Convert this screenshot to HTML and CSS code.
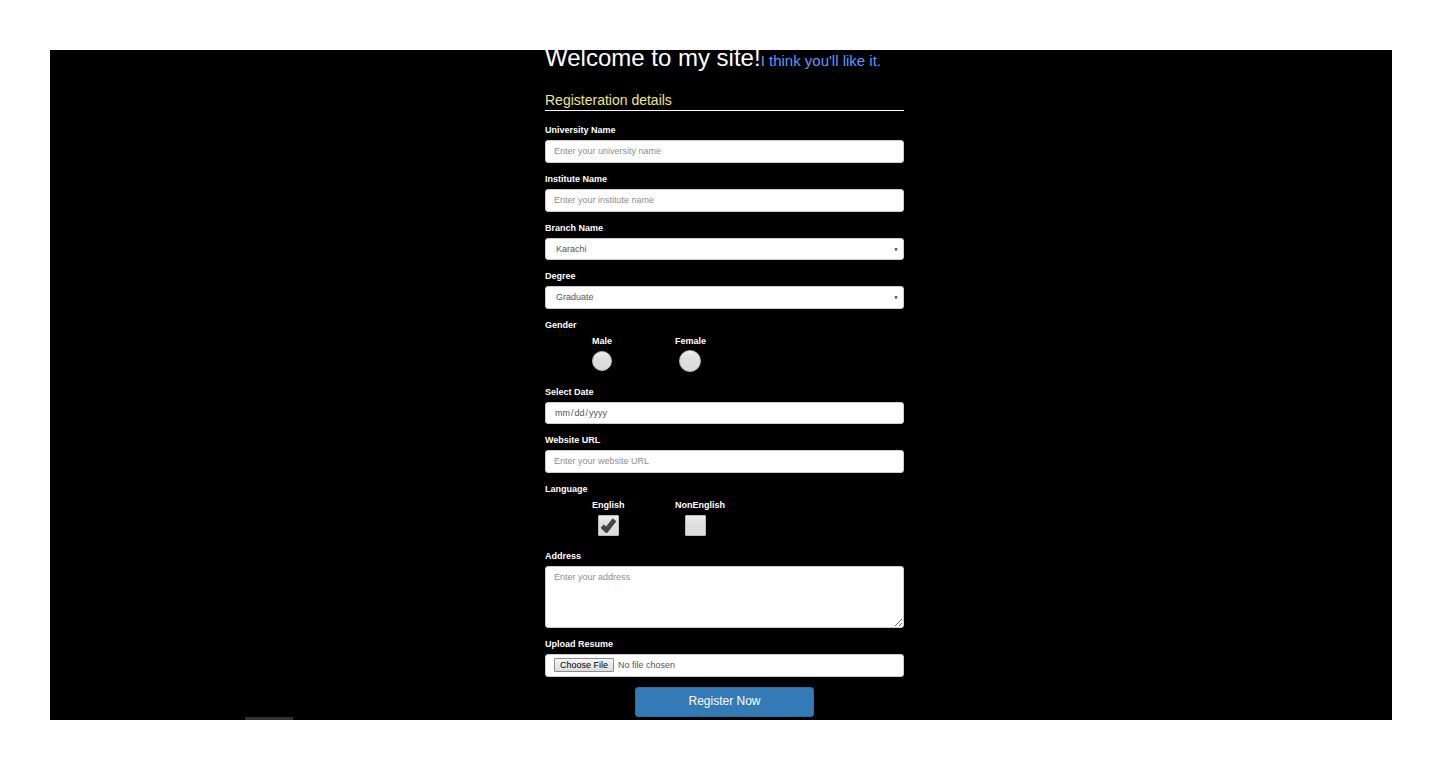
FILE: index.html
```html
<!DOCTYPE html>
<html lang="en-US">
<head>
<meta charset="utf-8">
<title>Registration</title>
<link rel="stylesheet" href="styles.css">
</head>
<body>
<main class="stage">
  <form class="form">
    <header class="welcome">
      <h1 class="title">Welcome to my site!</h1><span class="tagline">I think you'll like it.</span>
    </header>
    <h2 class="section">Registeration details</h2>

    <div class="group">
      <label class="label" for="university">University Name</label>
      <input class="field" id="university" type="text" placeholder="Enter your university name">
    </div>
    <div class="group">
      <label class="label" for="institute">Institute Name</label>
      <input class="field" id="institute" type="text" placeholder="Enter your institute name">
    </div>
    <div class="group">
      <label class="label" for="branch">Branch Name</label>
      <div class="select">
        <select class="field short" id="branch"><option>Karachi</option></select>
        <svg class="arrow" viewBox="0 0 4 4" aria-hidden="true"><path d="M0.3 0.3h3.4L2 3.4z"/></svg>
      </div>
    </div>
    <div class="group">
      <label class="label" for="degree">Degree</label>
      <div class="select">
        <select class="field" id="degree"><option>Graduate</option></select>
        <svg class="arrow" viewBox="0 0 4 4" aria-hidden="true"><path d="M0.3 0.3h3.4L2 3.4z"/></svg>
      </div>
    </div>
    <div class="group" role="group" aria-labelledby="gender">
      <span class="label" id="gender">Gender</span>
      <div class="options">
        <div class="option">
          <label class="caption" for="male">Male</label>
          <span class="tick"><input class="radio" id="male" type="radio" name="gender"></span>
        </div>
        <div class="option">
          <label class="caption" for="female">Female</label>
          <span class="tick indent-small"><input class="radio large" id="female" type="radio" name="gender"></span>
        </div>
      </div>
    </div>
    <div class="group">
      <label class="label" for="date">Select Date</label>
      <input class="field short" id="date" type="date">
    </div>
    <div class="group">
      <label class="label" for="website">Website URL</label>
      <input class="field" id="website" type="url" placeholder="Enter your website URL">
    </div>
    <div class="group" role="group" aria-labelledby="language">
      <span class="label" id="language">Language</span>
      <div class="options">
        <div class="option">
          <label class="caption" for="english">English</label>
          <span class="tick indent">
            <input class="check" id="english" type="checkbox" checked>
            <svg class="mark" viewBox="0 0 21 21" aria-hidden="true"><path d="M3 12.2L5.8 9.4L8.2 11.6L14.6 3.2L18.4 6.2L9.6 17.4Q8.6 18.6 7.4 17.4L3.2 13.4Q2.6 12.8 3 12.2z"/></svg>
          </span>
        </div>
        <div class="option">
          <label class="caption" for="nonenglish">NonEnglish</label>
          <span class="tick indent-large">
            <input class="check" id="nonenglish" type="checkbox">
          </span>
        </div>
      </div>
    </div>
    <div class="group">
      <label class="label" for="address">Address</label>
      <textarea class="field area" id="address" placeholder="Enter your address"></textarea>
    </div>
    <div class="group">
      <label class="label" for="resume">Upload Resume</label>
      <input class="field file" id="resume" type="file">
    </div>
    <button class="submit" type="submit">Register Now</button>
  </form>
  <div class="status"></div>
</main>
</body>
</html>
```
FILE: styles.css
```css
* {
  box-sizing: border-box;
}

body {
  margin: 0;
  padding: 50px;
  background: #fff;
  font-family: "Liberation Sans", Arial, sans-serif;
  font-size: 9px;
}

.stage {
  position: relative;
  display: flex;
  justify-content: center;
  min-height: calc(100vh - 100px);
  padding: 0 0 3px 7px;
  overflow: hidden;
  background: #000;
  color: #fff;
}

.form {
  display: flex;
  flex-direction: column;
  width: 100%;
  max-width: 359px;
}

.welcome {
  display: flex;
  align-items: baseline;
  margin-top: -5px;
  white-space: nowrap;
}

.title {
  margin: 0;
  font-size: 24px;
  font-weight: 400;
  line-height: 26px;
}

.tagline {
  color: #6495ff;
  font-size: 15px;
  line-height: 20px;
}

.section {
  margin: 19px 0 13px;
  border-bottom: 1px solid #fff;
  color: #f0e68c;
  font-size: 14px;
  font-weight: 400;
  line-height: 20px;
}

.group {
  display: flex;
  flex-direction: column;
  gap: 4px;
  margin-bottom: 10px;
}

.label,
.caption {
  font-weight: 700;
  line-height: 12px;
}

.field {
  display: block;
  width: 100%;
  height: 23px;
  margin: 0;
  padding: 0 8px 2px;
  border: 1px solid #ccc;
  border-radius: 3px;
  background: #fff;
  color: #555;
  font-family: inherit;
  font-size: 9px;
  line-height: 12px;
}

.field::placeholder {
  color: #8e8e8e;
}

.short {
  height: 22px;
  padding-bottom: 0;
}

.field::-webkit-calendar-picker-indicator {
  display: none;
}

.field::-webkit-datetime-edit-fields-wrapper,
.field::-webkit-datetime-edit {
  padding: 0;
}

.select {
  position: relative;
}

.select .field {
  padding-left: 10px;
  appearance: none;
}

.arrow {
  position: absolute;
  top: 10px;
  right: 6px;
  width: 4px;
  height: 4px;
  fill: #444;
  pointer-events: none;
}

.area {
  height: 62px;
  padding-top: 4px;
  resize: both;
}

.file {
  padding-top: 3px;
  line-height: 14px;
}

.file::file-selector-button {
  height: 14px;
  margin: 0 4px 0 0;
  padding: 0 5px;
  border: 1px solid #8c8c8c;
  border-radius: 1px;
  background: linear-gradient(#f6f6f6, #dcdcdc);
  color: #000;
  font-family: inherit;
  font-size: 9px;
  line-height: 12px;
}

.options {
  display: grid;
  grid-template-columns: 83px 83px;
  padding-left: 47px;
}

.option {
  display: flex;
  flex-direction: column;
  gap: 3px;
}

.tick {
  position: relative;
  display: flex;
  align-items: center;
  height: 26px;
  padding-bottom: 4px;
}

.indent-small {
  margin-left: 4px;
}

.indent {
  margin-left: 6px;
}

.indent-large {
  margin-left: 10px;
}

.radio,
.check {
  width: 20px;
  height: 20px;
  margin: 0;
  border: 1px solid #bbb;
  background: linear-gradient(#eee, #dedede 40%, #dcdcdc);
  appearance: none;
}

.radio {
  border-radius: 50%;
}

.large {
  width: 22px;
  height: 22px;
}

.check {
  width: 21px;
  height: 21px;
  border-radius: 1px;
}

.indent,
.indent-large {
  padding-bottom: 3px;
}

.mark {
  position: absolute;
  top: 1px;
  left: 0;
  width: 21px;
  height: 21px;
  fill: #444;
  pointer-events: none;
}

.submit {
  align-self: center;
  width: 50%;
  height: 30px;
  padding: 0 0 2px;
  border: 1px solid #2e6da4;
  border-radius: 3px;
  background: #337ab7;
  color: #fff;
  font-family: inherit;
  font-size: 12px;
  line-height: 16px;
}

.status {
  position: absolute;
  bottom: 0;
  left: 195px;
  width: 48px;
  height: 3px;
  background: #333;
}
```
